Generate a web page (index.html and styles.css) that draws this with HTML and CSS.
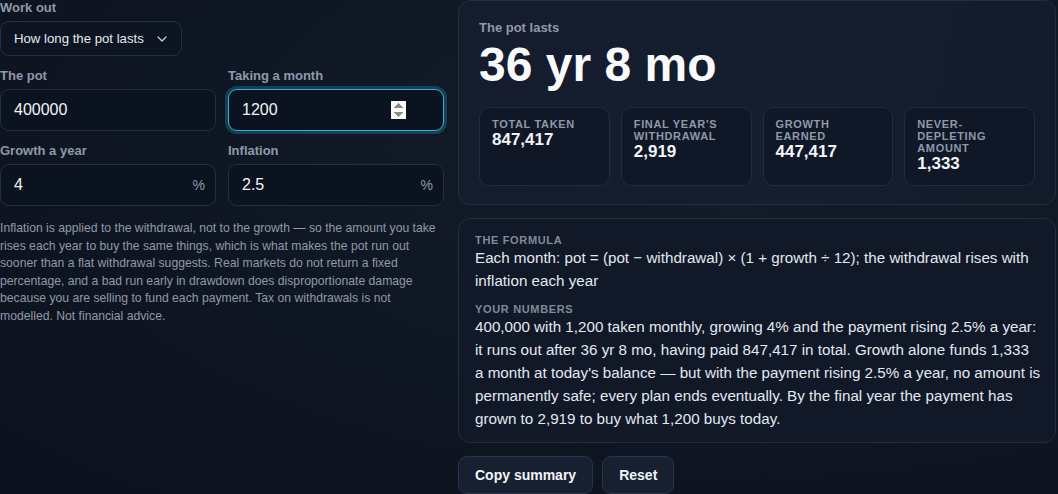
FILE: index.html
```html
<!DOCTYPE html>
<html lang="en">
<head>
<meta charset="utf-8">
<title>Drawdown calculator</title>
<link rel="stylesheet" href="styles.css">
</head>
<body>
<main class="layout">
  <section class="controls">
    <div class="field">
      <label class="label" for="mode">Work out</label>
      <div class="select-wrap">
        <select id="mode" class="select">
          <option>How long the pot lasts</option>
        </select>
        <svg class="chev" width="10" height="6" viewBox="0 0 10 6"><path d="M1 1l4 4 4-4" fill="none" stroke="#cbd5e1" stroke-width="1.2" stroke-linecap="round" stroke-linejoin="round"/></svg>
      </div>
    </div>
    <div class="grid2">
      <div class="field">
        <label class="label" for="pot">The pot</label>
        <div class="input-wrap"><input id="pot" class="input" type="text" value="400000"></div>
      </div>
      <div class="field">
        <label class="label" for="take">Taking a month</label>
        <div class="input-wrap"><input id="take" class="input input-focus" type="number" value="1200"></div>
      </div>
      <div class="field">
        <label class="label" for="growth">Growth a year</label>
        <div class="input-wrap"><input id="growth" class="input" type="text" value="4"><span class="suffix">%</span></div>
      </div>
      <div class="field">
        <label class="label" for="infl">Inflation</label>
        <div class="input-wrap"><input id="infl" class="input" type="text" value="2.5"><span class="suffix">%</span></div>
      </div>
    </div>
    <p class="note">Inflation is applied to the withdrawal, not to the growth — so the amount you take rises each year to buy the same things, which is what makes the pot run out sooner than a flat withdrawal suggests. Real markets do not return a fixed percentage, and a bad run early in drawdown does disproportionate damage because you are selling to fund each payment. Tax on withdrawals is not modelled. Not financial advice.</p>
  </section>

  <section class="results">
    <div class="card hero">
      <div class="hero-label">The pot lasts</div>
      <div class="hero-value">36 yr 8 mo</div>
      <div class="stats">
        <div class="stat"><div class="stat-label">Total taken</div><div class="stat-value">847,417</div></div>
        <div class="stat"><div class="stat-label">Final year's withdrawal</div><div class="stat-value">2,919</div></div>
        <div class="stat"><div class="stat-label">Growth earned</div><div class="stat-value">447,417</div></div>
        <div class="stat"><div class="stat-label">Never-depleting amount</div><div class="stat-value">1,333</div></div>
      </div>
    </div>
    <div class="card explain">
      <div class="ex-label">The formula</div>
      <p class="ex-text">Each month: pot = (pot − withdrawal) × (1 + growth ÷ 12); the withdrawal rises with inflation each year</p>
      <div class="ex-label ex-label-gap">Your numbers</div>
      <p class="ex-text">400,000 with 1,200 taken monthly, growing 4% and the payment rising 2.5% a year: it runs out after 36 yr 8 mo, having paid 847,417 in total. Growth alone funds 1,333 a month at today's balance — but with the payment rising 2.5% a year, no amount is permanently safe; every plan ends eventually. By the final year the payment has grown to 2,919 to buy what 1,200 buys today.</p>
    </div>
    <div class="actions">
      <button class="btn" type="button">Copy summary</button>
      <button class="btn" type="button">Reset</button>
    </div>
  </section>
</main>
</body>
</html>
```

FILE: styles.css
```css
* { box-sizing: border-box; }
html, body { margin: 0; padding: 0; }
body {
  background: radial-gradient(ellipse at 70% 30%, #141c2b 0%, #0f1623 55%, #0c121d 100%);
  min-height: 100vh;
  color: #e2e8f0;
  font-family: "Liberation Sans", Arial, sans-serif;
  overflow: hidden;
}
.layout {
  display: grid;
  grid-template-columns: 444px 1fr;
  column-gap: 14px;
  align-items: start;
}
.controls { display: flex; flex-direction: column; }
.field { display: flex; flex-direction: column; gap: 5px; }
.label {
  font-size: 13px;
  line-height: 16px;
  font-weight: 700;
  color: #8e99aa;
}
.select-wrap { position: relative; width: 182px; }
.select {
  appearance: none;
  -webkit-appearance: none;
  width: 182px;
  height: 35px;
  background: #0d1422;
  border: 1px solid #243044;
  border-radius: 9px;
  color: #e5e9ef;
  font-family: "Liberation Sans", Arial, sans-serif;
  font-size: 13.2px;
  padding: 0 30px 0 13px;
  outline: none;
}
.chev { position: absolute; left: 157px; top: 15px; pointer-events: none; }
.grid2 {
  display: grid;
  grid-template-columns: 216px 216px;
  column-gap: 12px;
  row-gap: 12px;
  margin-top: 12px;
}
.input-wrap { position: relative; }
.input {
  width: 100%;
  height: 42px;
  background: #0b1220;
  border: 1px solid #232e40;
  border-radius: 9px;
  color: #f1f5f9;
  font-family: "Liberation Sans", Arial, sans-serif;
  font-size: 16px;
  padding: 10px 37px 10px 13px;
  outline: none;
}
.input-focus {
  border-color: #2fb3cf;
  box-shadow: 0 0 0 3px rgba(34, 140, 170, 0.35);
}
.input-focus::-webkit-inner-spin-button { opacity: 1; }
.suffix {
  position: absolute;
  right: 11px;
  top: 13px;
  font-size: 14px;
  color: #8e99aa;
}
.note {
  margin: 14px 0 0;
  font-size: 12.2px;
  line-height: 17.5px;
  color: #8f99a9;
}
.results { display: flex; flex-direction: column; gap: 13px; padding-right: 2px; }
.card {
  background: #141c2c;
  border: 1px solid #232d3f;
  border-radius: 12px;
}
.hero { padding: 18px 20px 18px; background: linear-gradient(100deg, #141c2d 0%, #151e2f 60%, #131b2a 100%); }
.hero-label {
  font-size: 13px;
  line-height: 18px;
  font-weight: 700;
  color: #8e99aa;
}
.hero-value {
  margin-top: 4px;
  font-size: 48px;
  line-height: 48px;
  font-weight: 700;
  color: #f8fafc;
}
.stats {
  margin-top: 18px;
  display: grid;
  grid-template-columns: repeat(4, 1fr);
  gap: 11px;
}
.stat {
  background: #101726;
  border: 1px solid #222c3e;
  border-radius: 10px;
  padding: 10px 12px 11px;
}
.stat-label {
  font-size: 11px;
  line-height: 12px;
  font-weight: 700;
  letter-spacing: 0.06em;
  text-transform: uppercase;
  color: #8e99aa;
}
.stat-value {
  font-size: 17px;
  line-height: 20px;
  font-weight: 700;
  color: #f1f5f9;
}
.explain { padding: 15px 14px 12px 16px; background: #111827; }
.ex-label {
  font-size: 11px;
  line-height: 12px;
  font-weight: 700;
  letter-spacing: 0.06em;
  text-transform: uppercase;
  color: #7f8a9b;
}
.ex-label-gap { margin-top: 11px; }
.ex-text {
  margin: 0;
  font-size: 15.2px;
  line-height: 23px;
  color: #e2e8f0;
}
.actions { display: flex; gap: 9px; }
.btn {
  background: #172031;
  border: 1px solid #29344a;
  border-radius: 9px;
  color: #f1f5f9;
  font-family: "Liberation Sans", Arial, sans-serif;
  font-size: 14px;
  line-height: 16px;
  font-weight: 700;
  padding: 10px 16px;
}
```
